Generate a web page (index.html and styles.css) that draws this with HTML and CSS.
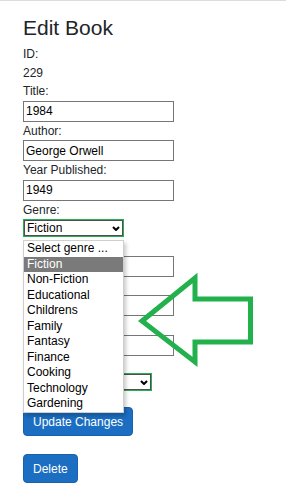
FILE: index.html
```html
<!DOCTYPE html>
<html lang="en">
<head>
  <meta charset="UTF-8" />
  <meta name="viewport" content="width=device-width, initial-scale=1.0"/>
  <title>Edit Book</title>
  <link rel="stylesheet" href="styles.css">
</head>
<body>
  <div class="page">
    <div class="container">
      <h2>Edit Book</h2>
      <span class="info">ID:</span>
      <span class="info">229</span>

      <form class="book-form">
        <div class="field">
          <label for="title">Title:</label>
          <input type="text" id="title" value="1984" />
        </div>
        <div class="field">
          <label for="author">Author:</label>
          <input type="text" id="author" value="George Orwell" />
        </div>
        <div class="field">
          <label for="year">Year Published:</label>
          <input type="text" id="year" value="1949" />
        </div>

        <!-- Genre select, opened -->
        <div class="field genre-field">
          <label>Genre:</label>
          <div class="select select-genre">
            <span>Fiction</span>
            <svg class="chevron" width="8" height="5" viewBox="0 0 8 5"><polyline points="1,1 4,4 7,1" /></svg>
          </div>
          <ul class="genre-list">
            <li>Select genre ...</li>
            <li class="active">Fiction</li>
            <li>Non-Fiction</li>
            <li>Educational</li>
            <li>Childrens</li>
            <li>Family</li>
            <li>Fantasy</li>
            <li>Finance</li>
            <li>Cooking</li>
            <li>Technology</li>
            <li>Gardening</li>
          </ul>
        </div>

        <!-- These fields sit under the open list, so their labels are hidden -->
        <div class="field">
          <label for="pages" aria-label="Pages"></label>
          <input type="text" id="pages" />
        </div>
        <div class="field">
          <label for="language" aria-label="Language"></label>
          <input type="text" id="language" />
        </div>
        <div class="field">
          <label for="copies" aria-label="Copies"></label>
          <input type="text" id="copies" />
        </div>
        <div class="field">
          <label aria-label="Status"></label>
          <div class="select select-status">
            <span></span>
            <svg class="chevron" width="8" height="5" viewBox="0 0 8 5"><polyline points="1,1 4,4 7,1" /></svg>
          </div>
        </div>

        <div class="actions">
          <button type="submit" class="btn">Update Changes</button>
          <button type="button" class="btn">Delete</button>
        </div>
      </form>
    </div>

    <!-- Annotation arrow -->
    <svg class="arrow" width="286" height="494" viewBox="0 0 286 494">
      <polygon points="142,321 195,278 195,299 250.5,299 250.5,342 195,342 195,362" />
    </svg>
  </div>
</body>
</html>
```

FILE: styles.css
```css
/* Base */
body {
  margin: 0;
  font-family: "Liberation Sans", Arial, sans-serif;
  font-size: 12px;
  color: #212529;
  background: #fff;
}

.page {
  position: relative;
  border-top: 1px solid #dcdcdc;
  min-height: 493px;
}

.container {
  padding: 0 23px;
}

h2 {
  font-size: 21px;
  font-weight: normal;
  line-height: 24px;
  margin: 15px 0 5px;
}

.info,
.field label {
  display: block;
  line-height: 18.5px;
  min-height: 18.5px;
}

/* Form fields */
.field input {
  display: block;
  box-sizing: border-box;
  width: 151px;
  height: 21px;
  margin: 0;
  padding: 1px 2px;
  border: 1px solid #767676;
  font-family: inherit;
  font-size: 12px;
  color: #000;
}

.select {
  box-sizing: border-box;
  height: 16px;
  margin: 1px 0 1px 1px;
  padding: 0 2px;
  border: 1px solid #4f4f4f;
  outline: 1px solid #26b050;
  display: flex;
  align-items: center;
  justify-content: space-between;
  color: #000;
}
.select-genre { width: 99px; }
.select-status { width: 127px; margin-top: 0; }

.chevron polyline {
  fill: none;
  stroke: #000;
  stroke-width: 2;
}

/* Open dropdown list */
.genre-field {
  position: relative;
}
.genre-list {
  position: absolute;
  left: 0;
  top: 39.5px;
  z-index: 2;
  box-sizing: border-box;
  width: 101px;
  margin: 0;
  padding: 0;
  list-style: none;
  background: #fff;
  border: 1px solid #cfcfcf;
  box-shadow: 2px 3px 4px rgba(0, 0, 0, 0.22);
  color: #000;
}
.genre-list li {
  line-height: 15.5px;
  padding: 0 3px;
}
.genre-list .active {
  background: #7a7a7a;
  color: #fff;
}

/* Buttons */
.actions {
  display: flex;
  flex-direction: column;
  align-items: flex-start;
  gap: 18px;
  margin-top: 17px;
}
.btn {
  height: 29px;
  padding: 0 9px;
  font-family: inherit;
  font-size: 12px;
  color: #fff;
  background-color: #1b6ec2;
  border: 1px solid #1861ac;
  border-radius: 4px;
  cursor: pointer;
}

/* Arrow drawn over the page */
.arrow {
  position: absolute;
  left: 0;
  top: -1px;
  z-index: 3;
  pointer-events: none;
}
.arrow polygon {
  fill: none;
  stroke: #22b14c;
  stroke-width: 5;
  stroke-linejoin: miter;
}
```
